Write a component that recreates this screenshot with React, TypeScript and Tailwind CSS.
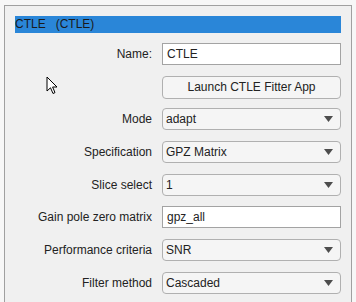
import React from "react";

const font = { fontFamily: '"Liberation Sans", Arial, sans-serif' };

function Arrow() {
  return (
    <svg width="9" height="6" viewBox="0 0 9 6" className="shrink-0">
      <path d="M0 0 L9 0 L4.5 6 Z" fill="#4d4d4d" />
    </svg>
  );
}

function Row({ label, children }: { label: string; children: React.ReactNode }) {
  return (
    <div className="flex items-center h-[22px]">
      <div className="w-[137px] text-right text-[12px] text-[#222] whitespace-nowrap">{label}</div>
      <div className="ml-[10px] w-[179px] h-full">{children}</div>
    </div>
  );
}

function TextBox({ value }: { value: string }) {
  return (
    <div className="h-full bg-white border border-[#a3a3a3] flex items-center px-[4px] text-[12px] text-[#222]">
      {value}
    </div>
  );
}

function Dropdown({ value }: { value: string }) {
  return (
    <div className="h-full bg-[#f5f5f5] border border-[#b0b0b0] rounded-[4px] flex items-center justify-between pl-[3px] pr-[7px] text-[12px] text-[#222]">
      <span>{value}</span>
      <Arrow />
    </div>
  );
}

export default function App() {
  return (
    <div style={font} className="relative w-[356px] h-[302px] overflow-hidden bg-[#f7f7f7] pt-[5px] pl-[4px]">
      <div className="w-[348px] h-[400px] border border-[#a0a0a0] bg-[#f0f0f0] pt-[10px] px-[10px]">
        <div className="h-[17px] bg-[#2a86d8] text-[12px] leading-[17px] text-[#1a1a1a] whitespace-pre">
          {"CTLE   (CTLE)"}
        </div>

        <div className="mt-[10px] flex flex-col gap-[10.7px]">
          <Row label="Name:">
            <TextBox value="CTLE" />
          </Row>
          <Row label="">
            <div className="h-[23px] bg-[#f5f5f5] border border-[#b0b0b0] rounded-[4px] flex items-center justify-center text-[12px] text-[#222]">
              Launch CTLE Fitter App
            </div>
          </Row>
          <Row label="Mode">
            <Dropdown value="adapt" />
          </Row>
          <Row label="Specification">
            <Dropdown value="GPZ Matrix" />
          </Row>
          <Row label="Slice select">
            <Dropdown value="1" />
          </Row>
          <Row label="Gain pole zero matrix">
            <TextBox value="gpz_all" />
          </Row>
          <Row label="Performance criteria">
            <Dropdown value="SNR" />
          </Row>
          <Row label="Filter method">
            <Dropdown value="Cascaded" />
          </Row>
        </div>
      </div>

      {/* mouse pointer */}
      <svg width="13" height="20" viewBox="0 0 13 20" className="absolute left-[46px] top-[76px]">
        <path
          d="M1 1 L1 15 L4.5 11.8 L7 17.5 L9 16.6 L6.6 11 L11 11 Z"
          fill="#fff"
          stroke="#000"
          strokeWidth="1"
          strokeLinejoin="miter"
        />
      </svg>
    </div>
  );
}
